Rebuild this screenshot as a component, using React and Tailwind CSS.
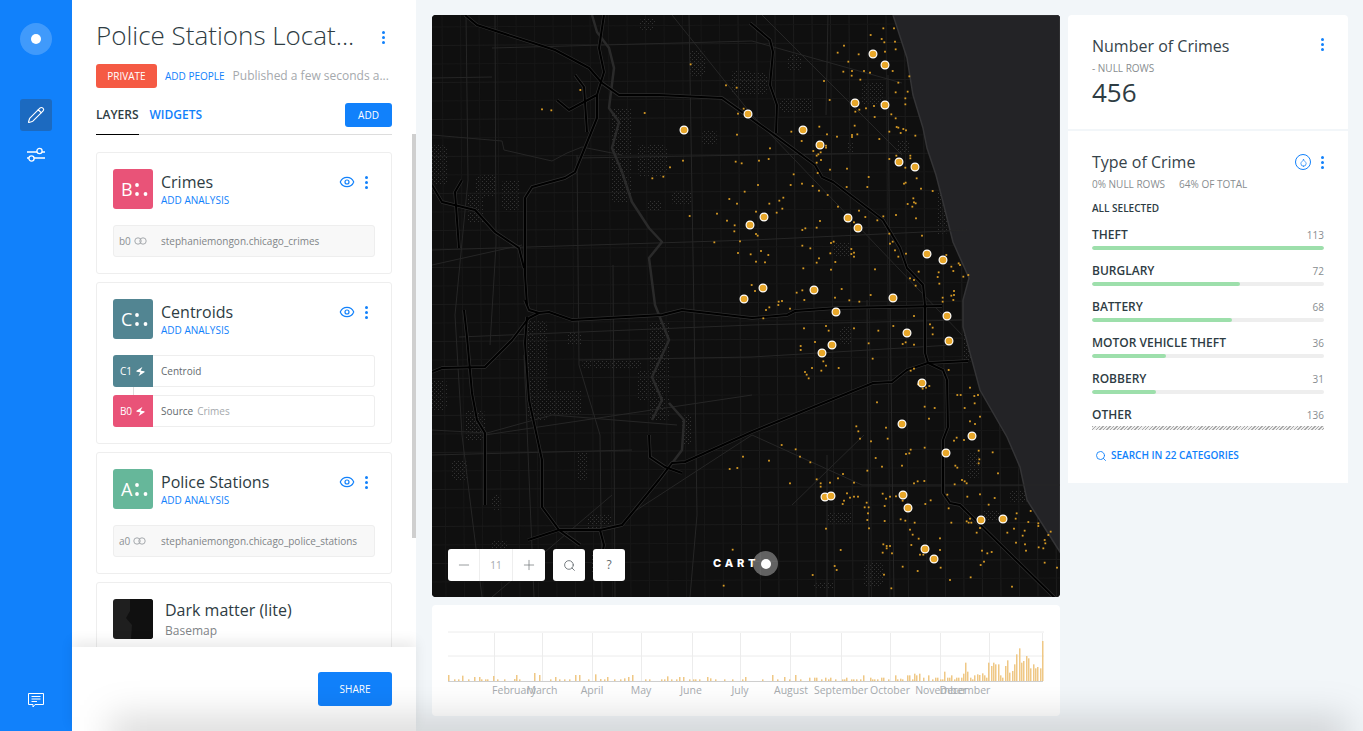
import { Eye, Droplet, Minus, Pencil, Plus, Search, Zap } from 'lucide-react'

// crime points, read off the map at 3x, grouped by the crop they came from
const northEast = [[400,40],[432,40],[362,60],[395,72],[403,82],[435,80],[282,92],[405,110],[437,103],[263,113],[326,118],[295,140],[280,170],[306,168],[342,168],[360,173],[428,168],[305,182],[478,184],[222,198],[331,194],[445,203],[437,232],[473,230],[466,250],[239,255],[466,268],[372,273],[348,280],[328,284],[316,290],[424,298],[374,306],[437,310],[314,332],[208,335],[440,336],[445,338],[460,342],[468,346],[124,350],[418,350],[452,354],[231,358],[322,358],[306,360],[306,366],[261,365],[496,362],[388,372],[155,378],[228,392],[228,398],[60,400],[190,408],[212,412],[205,418],[200,422],[439,422],[481,422],[481,430],[418,432],[213,435],[27,437],[56,432],[200,443],[466,458],[240,464],[291,461],[203,474],[131,478],[356,486],[500,490],[122,510],[24,510],[156,506],[188,513],[467,503],[462,506],[352,516],[290,516],[513,521],[207,527],[548,528],[233,540],[100,548],[88,557],[490,550],[492,562],[58,566],[473,567],[497,565],[487,575],[264,575],[97,581],[80,593],[18,590],[327,587],[346,606],[400,604],[438,600],[498,610],[382,616],[312,622],[210,618],[200,638],[166,640],[157,645],[18,657],[23,662],[418,656],[516,662],[428,680],[420,686],[251,680],[243,684],[157,692],[181,700],[304,702],[312,713],[304,717],[312,725],[435,706],[241,715],[33,708],[468,716],[55,720],[2,718],[445,725],[207,730],[200,743],[18,740],[45,742],[256,741],[160,760],[243,764],[375,763],[506,770],[589,720],[626,745],[630,750],[610,768],[566,772],[604,755],[563,786],[480,790],[492,795],[497,812],[568,806],[5,810],[15,828],[275,822],[157,826],[140,833],[612,828],[612,840],[362,840],[604,842],[328,860],[298,856],[255,848],[163,855],[96,858],[86,860],[578,848],[578,860],[610,855],[640,785],[655,780]]
const southEast = [[40,55],[48,30],[58,22],[85,15],[120,26],[162,85],[228,78],[236,92],[312,85],[385,92],[430,78],[492,48],[540,73],[548,83],[548,103],[356,130],[458,132],[467,127],[492,134],[195,126],[152,138],[152,150],[368,176],[220,184],[228,197],[266,204],[186,204],[214,212],[165,216],[170,224],[176,235],[482,212],[492,206],[596,210],[504,253],[538,258],[518,266],[528,263],[660,263],[622,285],[632,285],[673,288],[684,285],[674,310],[381,307],[524,320],[554,324],[644,324],[690,350],[660,364],[675,372],[537,356],[319,379],[325,394],[330,416],[408,383],[413,416],[363,424],[95,435],[137,448],[150,470],[57,482],[181,487],[377,474],[396,500],[456,497],[468,462],[478,460],[482,449],[524,443],[620,413],[612,422],[642,420],[686,452],[688,478],[686,490],[728,457],[616,497],[622,503],[352,512],[744,520],[636,540],[644,544],[650,550],[614,553],[503,544],[523,543],[492,550],[690,583],[734,594],[716,614],[592,584],[652,590],[120,550],[200,538],[212,550],[212,560],[240,548],[264,535],[279,522],[312,548],[291,580],[312,590],[324,590],[300,593],[282,602],[278,612],[350,608],[344,622],[356,622],[398,581],[438,589],[420,590],[408,596],[404,618],[458,602],[526,612],[542,601],[354,640],[352,660],[357,685],[404,663],[452,658],[466,662],[480,689],[494,668],[488,704],[506,716],[570,715],[596,625],[660,656],[650,664],[656,668],[664,668],[604,668],[680,698],[690,684],[800,640],[842,633],[797,656],[835,666],[865,670],[865,678],[792,686],[772,698],[824,692],[818,707],[895,705],[902,695],[884,720],[825,733],[880,745],[886,730],[866,742],[798,728],[828,752],[228,686],[272,750],[400,733],[410,738],[420,738],[410,745],[398,758],[426,760],[484,735],[510,764],[520,764],[570,750],[696,752],[712,760],[725,756],[702,785],[692,795],[254,798],[260,810],[188,825],[458,800],[402,824],[503,813],[572,803],[600,840],[662,832],[786,860],[424,865],[884,788],[921,803]]
const west = [[776,148],[882,211],[914,218],[935,281],[918,296],[445,225],[330,283],[358,286],[638,294],[915,359],[753,437],[714,457],[694,485],[661,490],[911,440],[929,445],[938,530],[892,552],[915,566],[773,603],[855,596],[885,617],[908,631],[907,649],[847,682],[924,679],[918,714],[893,1362],[916,1359],[933,1325],[902,1604],[875,1712]]

const smallPoints = [
  ...northEast.map(([x, y]) => [x / 3 + 318, y / 3]),
  ...southEast.map(([x, y]) => [x / 3 + 318, y / 3 + 285]),
  ...west.map(([x, y]) => [x / 3, y / 3]),
]

const stations = [[252,115],[316,99],[371,115],[388,130],[423,88],[453,90],[441,39],[453,50],[467,147],[483,152],[416,203],[426,213],[332,202],[318,210],[495,239],[511,245],[461,283],[515,301],[517,326],[382,275],[331,273],[312,284],[404,297],[475,318],[400,330],[390,338],[490,368],[470,409],[540,421],[514,438],[393,482],[399,481],[471,480],[476,493],[549,505],[571,504],[493,534],[502,544]]

const highways = [
  'M33 0L45 10L123 35L157 53L170 68L187 80L227 80L290 83L317 102L345 122L383 150L390 162L401 167L451 205L468 233L475 253L491 270L493 290L493 338L496 348L511 355L515 365L516 412L511 425L511 478L518 488L528 490L628 588',
  'M318 8L338 25L341 37L338 70L345 90L344 118',
  'M536 346L496 348L475 355L460 367L441 368L320 417L253 447L240 448L227 465L200 498L190 510L168 515L127 515L96 525',
  'M217 420L218 442L233 452L250 458',
  'M93 285L97 295L107 298L117 297L140 305L230 300L250 295L320 303L355 300L363 296L405 293L510 291',
  'M95 302L93 328L97 385L102 408L110 445L110 492L127 515L148 530',
  'M107 298L97 303L80 325L53 352L10 353L0 357',
  'M32 295L35 322L40 378L45 405L53 418L53 490',
  'M172 0L167 33L172 57L165 80L165 103L143 157L133 163L100 172L93 183L93 260L95 290',
  'M125 85L137 95L165 80',
  'M143 60L152 72L155 117',
  'M0 170L10 187L43 195L63 217L87 233L92 253',
  'M30 165L23 177L27 233',
  'M168 515L172 530L170 540',
]

const rivers = [
  'M160 0L165 17L177 33L182 53L177 93L187 107L180 133L190 157L200 187L217 213L230 227L217 243L223 290L237 325L220 362L230 385L220 405',
  'M237 388L252 405L250 435L235 455',
]

const arterials = [
  'M34 0L36 165L23 300L30 420L50 582','M63 0L64 230L58 330','M145 140L147 350L168 420L170 582',
  'M257 0L262 300L265 500L258 582','M396 0L394 100','M456 60L458 285L462 582','M435 285L437 582',
  'M92 340L102 582','M181 250L183 582','M60 33L320 26L470 68','M145 143L320 140L470 138',
  'M0 235L320 225L535 215','M27 322L320 310L530 305','M147 345L320 342L520 330','M0 120L70 126L72 135L120 146L135 138L150 132L190 140',
  'M0 63L60 62','M0 415L55 418L120 400L245 410','M53 420L320 380','M0 440L200 435',
  'M320 420L430 470L628 470','M200 498L320 420','M330 0L470 140','M240 0L320 100L530 320',
  'M360 490L432 420','M0 250L90 230','M395 440L395 582','M60 582L180 480',
]

// residential patches, filled with the dot pattern
const patches = [[180,93,20,94],[205,130,30,32],[44,160,20,22],[70,165,18,30],[36,178,16,30],[0,130,15,40],[270,115,15,15],[258,35,15,26],[300,55,20,25],[208,3,15,12],[95,305,20,100],[97,375,53,25],[135,318,15,12],[0,365,15,30],[150,345,60,8],[205,355,20,30],[218,305,20,100],[33,395,20,30],[145,435,10,30],[155,500,25,15],[60,480,10,15],[250,400,10,30],[357,40,10,15],[430,68,22,22],[356,40,13,15],[318,58,17,22],[348,83,33,14],[465,125,12,15],[505,175,10,45],[401,227,17,15],[415,127,7,13],[408,312,12,18],[535,438,13,25],[395,497,27,12],[551,495,17,10],[431,548,20,23],[381,568,23,6],[578,475,17,13],[531,308,8,40],[60,525,15,15],[160,535,25,25],[20,445,15,20],[240,175,20,15],[215,185,15,10]]

const vLines = Array.from({ length: 34 }, (_, i) => 10 + i * 18.5)
const hLines = Array.from({ length: 32 }, (_, i) => 8 + i * 18.5)

function ChicagoMap() {
  return (
    <svg viewBox="0 0 628 582" className="block h-full w-full">
      <defs>
        <pattern id="dots" width="4" height="4" patternUnits="userSpaceOnUse">
          <rect width="1" height="1" fill="#333333" />
          <rect x="2" y="2" width="1" height="1" fill="#333333" />
        </pattern>
      </defs>
      <rect width="628" height="582" fill="#0f0f0f" />
      {patches.map(([x, y, w, h], i) => <rect key={i} x={x} y={y} width={w} height={h} rx="4" fill="url(#dots)" />)}
      {vLines.map((x, i) => <line key={i} x1={x} y1="0" x2={x + 4} y2="582" stroke={x > 300 ? '#1d1d1d' : '#171717'} strokeWidth="1" />)}
      {hLines.map((y, i) => <line key={i} x1="0" y1={y + 4} x2="628" y2={y} stroke={i % 2 ? '#1b1b1b' : '#171717'} strokeWidth="1" />)}
      <path d="M461 0L475 43L481 80L491 113L495 133L504 160L511 187L521 227L537 263L531 285L531 312L548 375L575 422L588 452L595 485L628 537L628 0Z" fill="#232326" stroke="#343436" strokeWidth="1.5" />
      {arterials.map((d, i) => <path key={i} d={d} fill="none" stroke="#262626" strokeWidth="1" />)}
      {rivers.map((d, i) => <path key={i} d={d} fill="none" stroke="#2a2a2a" strokeWidth="2.5" strokeLinejoin="round" />)}
      {highways.map((d, i) => <path key={i} d={d} fill="none" stroke="#2e2e2e" strokeWidth="3.4" strokeLinejoin="round" />)}
      {highways.map((d, i) => <path key={i} d={d} fill="none" stroke="#000" strokeWidth="2" strokeLinejoin="round" />)}
      {smallPoints.map(([x, y], i) => <rect key={i} x={x - 0.9} y={y - 0.9} width="1.8" height="1.8" fill="#d99c25" />)}
      {stations.map(([x, y], i) => <circle key={i} cx={x} cy={y} r="3.9" fill="#e8a72a" stroke="#fff" strokeWidth="1.2" />)}
    </svg>
  )
}

// [x, height], read at 3x from the timeline
const barsLeft = [[48,18],[65,5],[78,5],[90,16],[108,5],[126,12],[140,12],[148,5],[158,5],[166,5],[182,15],[195,5],[216,5],[245,6],[253,18],[262,5],[307,24],[322,18],[355,5],[370,12],[380,5],[397,5],[410,5],[428,18],[440,18],[468,5],[490,20],[504,6],[515,5],[525,12],[545,5],[565,5],[575,8],[588,12],[600,18],[640,5],[650,5],[686,5],[695,5],[705,14],[718,5],[733,5],[742,12],[752,12],[772,5],[782,5],[790,5],[800,5],[825,12],[835,8],[850,5],[875,5],[900,5],[930,5],[940,12],[990,5],[1020,18],[1035,5],[1055,12],[1070,5],[1090,18],[1105,5]]
const barsRight = [[28,10],[42,10],[48,10],[62,5],[75,10],[83,5],[90,10],[105,5],[125,5],[132,5],[139,10],[153,5],[160,5],[167,5],[181,5],[188,17],[209,10],[216,5],[223,5],[230,5],[244,10],[250,10],[264,5],[285,17],[292,5],[299,7],[306,5],[322,17],[328,17],[335,5],[343,22],[349,17],[356,22],[370,10],[385,17],[397,5],[405,10],[412,10],[419,5],[427,5],[433,28],[440,10],[447,10],[454,17],[461,5],[468,10],[475,10],[482,10],[490,22],[496,55],[502,28],[509,10],[516,5],[523,17],[530,20],[538,18],[545,23],[551,17],[559,10],[565,55],[572,45],[580,55],[586,50],[593,50],[601,17],[607,10],[614,45],[622,62],[628,25],[635,30],[643,50],[649,80],[656,98],[663,55],[670,60],[677,75],[685,68],[691,38],[698,50],[706,38],[712,42],[719,38],[727,120]]
const bars = [...barsLeft.map(([x, h]) => [Math.round(x / 3), h / 3]), ...barsRight.map(([x, h]) => [Math.round(x / 3) + 368, h / 3])]

const ticks = [62, 110, 160, 209, 260, 308, 358, 409, 458, 508, 557, 610]
const months = [['February', 82], ['March', 110], ['April', 160], ['May', 209], ['June', 259], ['July', 308], ['August', 359], ['September', 409], ['October', 458], ['November', 509], ['December', 533]]

function Timeline() {
  return (
    <div className="h-[111px] rounded bg-white">
      <svg viewBox="0 0 628 111" className="block h-full w-full">
        <line x1="16" y1="27" x2="612" y2="27" stroke="#ececec" />
        <line x1="16" y1="51" x2="612" y2="51" stroke="#ececec" />
        {ticks.map(x => <line key={x} x1={x + 0.5} y1="28" x2={x + 0.5} y2="76" stroke="#ececec" />)}
        {bars.map(([x, h], i) => <rect key={i} x={x} y={76 - h} width="1.5" height={h} fill="#efc885" />)}
        <line x1="16" y1="76.5" x2="611" y2="76.5" stroke="#cfcfcf" />
        {months.map(([m, x]) => <text key={m} x={x} y="89" textAnchor="middle" fontSize="10.5" fill="#a8acaf" fontFamily="Open Sans, sans-serif">{m}</text>)}
      </svg>
    </div>
  )
}

function Dots() {
  return (
    <div className="flex w-[3px] flex-col gap-[2px]">
      <span className="h-[3px] w-[3px] rounded-full bg-[#1181fb]" />
      <span className="h-[3px] w-[3px] rounded-full bg-[#1181fb]" />
      <span className="h-[3px] w-[3px] rounded-full bg-[#1181fb]" />
    </div>
  )
}

function LayerHead({ letter, color, title }) {
  return (
    <div className="flex h-10">
      <div className="flex h-10 w-10 items-center gap-[3px] rounded-[3px] pl-2 text-white" style={{ backgroundColor: color }}>
        <span className="w-[11px] text-[18px] leading-none">{letter}</span>
        <svg width="13" height="13" viewBox="0 0 13 13"><circle cx="2" cy="2" r="1.9" fill="#fff" /><circle cx="2" cy="11" r="1.9" fill="#fff" /><circle cx="10.5" cy="11" r="1.9" fill="#fff" /></svg>
      </div>
      <div className="ml-2 flex-1">
        <p className="mt-[3px] text-[16px] leading-5 text-[#2e3c43]">{title}</p>
        <p className="mt-[2px] text-[10px] leading-3 text-[#1181fb]">ADD ANALYSIS</p>
      </div>
      <div className="mr-[7px] mt-[6px] flex h-[14px] items-center gap-[10px]">
        <Eye size={16} strokeWidth={1.8} className="text-[#1181fb]" />
        <Dots />
      </div>
    </div>
  )
}

function Linked() {
  return (
    <svg width="13" height="8" viewBox="0 0 13 8" className="ml-[3px]">
      <circle cx="4" cy="4" r="3.2" fill="none" stroke="#a5a9ad" />
      <circle cx="9" cy="4" r="3.2" fill="none" stroke="#a5a9ad" />
    </svg>
  )
}

function SourceRow({ id, name }) {
  return (
    <div className="mt-4 flex h-8 items-center rounded-[3px] border border-[#eeeeee] bg-[#f8f8f8] text-[10px] text-[#7f8487]">
      <div className="flex w-[47px] items-center pl-[5px] text-[#8d9194]">{id}<Linked /></div>
      <span>{name}</span>
    </div>
  )
}

function NodeRow({ id, color, children }) {
  return (
    <div className="flex h-8 text-[10px]">
      <div className="flex w-10 items-center justify-center gap-[3px] rounded-l-[3px] text-white" style={{ backgroundColor: color }}>
        {id}<Zap size={11} fill="#fff" strokeWidth={0} className="rotate-12" />
      </div>
      <div className="flex flex-1 items-center gap-[4px] rounded-r-[3px] border border-l-0 border-[#eeeeee] pl-2 text-[#636a6e]">{children}</div>
    </div>
  )
}

const categories = [
  { name: 'THEFT', count: 113, width: 232 },
  { name: 'BURGLARY', count: 72, width: 148 },
  { name: 'BATTERY', count: 68, width: 140 },
  { name: 'MOTOR VEHICLE THEFT', count: 36, width: 74 },
  { name: 'ROBBERY', count: 31, width: 64 },
]

function Category({ name, count, children }) {
  return (
    <div className="h-9">
      <div className="flex h-[23px] items-end justify-between leading-none">
        <span className="pb-[5px] text-[12px] font-[550] text-[#2e3c43]">{name}</span>
        <span className="pb-[6px] text-[10px] text-[#888d90]">{count}</span>
      </div>
      {children}
    </div>
  )
}

export default function App() {
  return (
    <div className="relative flex h-[731px] w-[1363px] overflow-hidden bg-[#f2f6f9] font-['Open_Sans',sans-serif]">
      <aside className="flex w-[72px] shrink-0 flex-col items-center bg-[#1181fb] pt-[23px]">
        <div className="flex h-8 w-8 items-center justify-center rounded-full bg-white/20">
          <span className="h-[10px] w-[10px] rounded-full bg-white" />
        </div>
        <div className="mt-[44px] flex h-8 w-8 items-center justify-center rounded-[3px] bg-[#1c6ac0]">
          <Pencil size={18} strokeWidth={1.5} className="text-white" />
        </div>
        <svg width="20" height="16" viewBox="0 0 20 16" className="mt-4" fill="none" stroke="#fff" strokeWidth="1.3">
          <path d="M1 5H11M16 5H19M1 11H3M8 11H19" />
          <circle cx="13.5" cy="4" r="2.6" />
          <circle cx="5.5" cy="11.5" r="2.6" />
        </svg>
        <svg width="16" height="15" viewBox="0 0 16 15" className="mb-[23px] mt-auto" fill="none" stroke="#fff" strokeWidth="1">
          <path d="M.5.5H15.5V11.5H7L5 14V11.5H.5Z" />
          <path d="M3.5 3.5H12.5M3.5 6H12.5M3.5 8.5H9" />
        </svg>
      </aside>

      <section className="relative flex w-[344px] shrink-0 flex-col bg-white">
        <header className="h-[135px] shrink-0 px-6">
          <div className="flex h-[64px] items-start justify-between pr-[7px] pt-[17px]">
            <h1 className="text-[26px] font-light leading-[36px] text-[#2e3c43]">Police Stations Locat...</h1>
            <div className="mt-[14px]"><Dots /></div>
          </div>
          <div className="flex h-6 items-center">
            <span className="flex h-6 w-[61px] items-center justify-center rounded-[3px] bg-[#f55a44] text-[10px] text-white">PRIVATE</span>
            <span className="ml-2 text-[10px] text-[#1181fb]">ADD PEOPLE</span>
            <span className="ml-2 text-[12px] text-[#a5a9ad]">Published a few seconds a...</span>
          </div>
          <div className="mt-[15px] flex h-[32px] items-start border-b border-[#dddddd]">
            <span className="h-[32px] border-b border-black pt-[3px] text-[12px] font-semibold leading-[18px] text-[#2e3c43]">LAYERS</span>
            <span className="ml-[11px] pt-[3px] text-[12px] font-semibold leading-[18px] text-[#1181fb]">WIDGETS</span>
            <button className="ml-auto h-6 w-[47px] rounded-[3px] bg-[#1181fb] text-[10px] font-medium text-white">ADD</button>
          </div>
        </header>

        <div className="flex flex-1 flex-col gap-2 overflow-hidden px-6 pt-[17px]">
          <div className="h-[122px] shrink-0 rounded-[3px] border border-[#eeeeee] px-4 pt-4">
            <LayerHead letter="B" color="#e95378" title="Crimes" />
            <SourceRow id="b0" name="stephaniemongon.chicago_crimes" />
          </div>
          <div className="h-[162px] shrink-0 rounded-[3px] border border-[#eeeeee] px-4 pt-4">
            <LayerHead letter="C" color="#528592" title="Centroids" />
            <div className="relative mt-4 flex flex-col gap-2">
              <span className="absolute left-5 top-8 h-2 w-px bg-[#dddddd]" />
              <NodeRow id="C1" color="#528592">Centroid</NodeRow>
              <NodeRow id="B0" color="#e95378"><span className="font-medium">Source</span> <span className="text-[#a5a9ad]">Crimes</span></NodeRow>
            </div>
          </div>
          <div className="h-[122px] shrink-0 rounded-[3px] border border-[#eeeeee] px-4 pt-4">
            <LayerHead letter="A" color="#66b79a" title="Police Stations" />
            <SourceRow id="a0" name="stephaniemongon.chicago_police_stations" />
          </div>
          <div className="flex h-[100px] shrink-0 rounded-[3px] border border-[#eeeeee] px-4 pt-4">
            <svg width="40" height="40" viewBox="0 0 40 40" className="rounded-[3px]">
              <rect width="40" height="40" fill="#1f1f1f" />
              <path d="M17 0H40V40H18L19 26L13 19L17 12Z" fill="#101010" />
            </svg>
            <div className="ml-3">
              <p className="mt-[1px] text-[16px] leading-5 text-[#2e3c43]">Dark matter (lite)</p>
              <p className="mt-[3px] text-[12px] leading-4 text-[#7f8487]">Basemap</p>
            </div>
          </div>
        </div>

        <footer className="relative flex h-[84px] shrink-0 justify-end bg-white px-6 pt-[25px] shadow-[0_-6px_12px_rgba(0,0,0,0.08)]">
          <button className="h-[34px] w-[74px] rounded-[3px] bg-[#1181fb] text-[10px] font-medium text-white">SHARE</button>
        </footer>
        <span className="absolute right-0 top-[134px] h-[404px] w-1 bg-[#cfcfcf]" />
      </section>

      <main className="ml-4 flex w-[628px] shrink-0 flex-col gap-2 pt-[15px]">
        <div className="relative h-[582px] overflow-hidden rounded bg-[#0f0f0f]">
          <ChicagoMap />
          <div className="absolute left-4 top-[534px] flex gap-2">
            <div className="flex h-8 w-[97px] rounded-[3px] bg-white text-[#636a6e]">
              <div className="flex w-8 items-center justify-center border-r border-[#eeeeee]"><Minus size={16} strokeWidth={1} /></div>
              <div className="flex w-[33px] items-center justify-center border-r border-[#eeeeee] text-[10px] text-[#a5a9ad]">11</div>
              <div className="flex w-8 items-center justify-center"><Plus size={16} strokeWidth={1} /></div>
            </div>
            <div className="flex h-8 w-8 items-center justify-center rounded-[3px] bg-white text-[#636a6e]"><Search size={13} strokeWidth={1.6} /></div>
            <div className="flex h-8 w-8 items-center justify-center rounded-[3px] bg-white text-[12px] text-[#636a6e]">?</div>
          </div>
          <div className="absolute left-[281px] top-[536px] flex h-[25px] items-center">
            <span className="relative z-10 font-['Inter',sans-serif] text-[11px] font-extrabold leading-none tracking-[3.8px] text-white">CART</span>
            <span className="-ml-[6px] flex h-[25px] w-[25px] items-center justify-center rounded-full bg-white/35">
              <span className="h-[10px] w-[10px] rounded-full bg-white" />
            </span>
          </div>
        </div>
        <Timeline />
      </main>

      <div className="ml-2 flex w-[280px] shrink-0 flex-col gap-[2px] pt-[15px]">
        <div className="h-[114px] rounded-t bg-white px-6 pt-[19px]">
          <div className="flex items-start justify-between">
            <p className="text-[16px] leading-6 text-[#36434a]">Number of Crimes</p>
            <div className="mt-[4px]"><Dots /></div>
          </div>
          <p className="mt-[4px] text-[10px] leading-3 text-[#888d90]">- NULL ROWS</p>
          <p className="text-[26px] leading-9 text-[#2e3c43]">456</p>
        </div>
        <div className="h-[352px] bg-white px-6 pt-[19px]">
          <div className="flex items-start justify-between">
            <p className="text-[16px] leading-6 text-[#36434a]">Type of Crime</p>
            <div className="flex items-center gap-[10px] pt-[4px]">
              <span className="flex h-4 w-4 items-center justify-center rounded-full border border-[#1181fb]">
                <Droplet size={9} strokeWidth={2} className="text-[#1181fb]" />
              </span>
              <Dots />
            </div>
          </div>
          <div className="mt-[4px] flex gap-[14px] text-[10px] leading-3 text-[#888d90]">
            <span>0% NULL ROWS</span><span>64% OF TOTAL</span>
          </div>
          <p className="mt-3 text-[10px] font-semibold leading-3 text-[#2e3c43]">ALL SELECTED</p>
          <div className="mt-[9px]">
            {categories.map(c => (
              <Category key={c.name} name={c.name} count={c.count}>
                <div className="h-1 overflow-hidden rounded-sm bg-[#eeeeee]">
                  <div className="h-full rounded-sm bg-[#9ddfab]" style={{ width: c.width }} />
                </div>
              </Category>
            ))}
            <Category name="OTHER" count={136}>
              <div className="h-1 bg-[repeating-linear-gradient(135deg,#a9a9a9_0,#a9a9a9_1px,#eeeeee_1px,#eeeeee_2.5px)]" />
            </Category>
          </div>
          <div className="mt-[9px] flex items-center gap-[4px] pl-[3px] text-[10px] font-semibold text-[#1181fb]">
            <Search size={12} strokeWidth={1.8} />
            <span>SEARCH IN 22 CATEGORIES</span>
          </div>
        </div>
      </div>

      <div className="pointer-events-none absolute -bottom-[26px] left-[110px] right-[15px] h-[40px] bg-black/15 blur-[18px]" />
    </div>
  )
}
